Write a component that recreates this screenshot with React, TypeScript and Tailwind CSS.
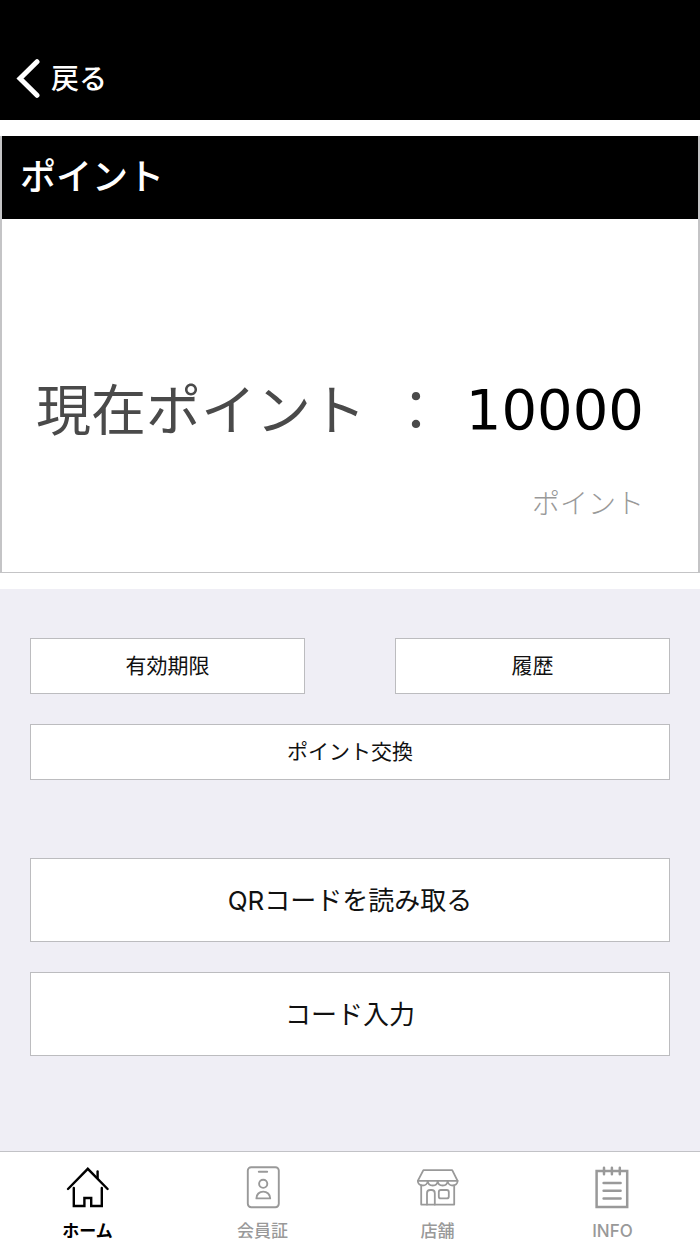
import type { ReactNode } from "react";

function HomeIcon() {
  return (
    <svg viewBox="0 0 44 44" className="size-11" fill="none" stroke="currentColor" strokeWidth="2.4" strokeLinecap="round" strokeLinejoin="miter" aria-hidden="true">
      <path d="M2 24 21.8 3.8 41.6 24" />
      <path d="M31.6 6.5V13" />
      <path d="M7.8 23V41H18.4V33H25.2V41H35.8V23" />
    </svg>
  );
}

function MemberCardIcon() {
  return (
    <svg viewBox="0 0 44 44" className="size-11" fill="none" stroke="currentColor" strokeWidth="1.9" strokeLinecap="round" strokeLinejoin="round" aria-hidden="true">
      <rect x="6.8" y="2.2" width="31" height="40" rx="3.4" />
      <path d="M17.8 6.8H26.2" />
      <circle cx="22.2" cy="18.8" r="4.1" />
      <path d="M15.4 33.4C15.4 29.4 18.3 26.6 22.2 26.6S29.2 29.4 29.2 33.4Z" />
    </svg>
  );
}

function StoreIcon() {
  return (
    <svg viewBox="0 0 44 44" className="size-11" fill="none" stroke="currentColor" strokeWidth="1.8" strokeLinecap="round" strokeLinejoin="round" aria-hidden="true">
      <path d="M7.4 5.2H36.2L41.6 15.8H1.8Z" />
      <path d="M1.8 15.8C1.8 22 11.4 22 11.75 16C12.1 22 21.4 22 21.7 16C22 22 31.3 22 31.65 16C32 22 41.6 22 41.6 15.8" />
      <path d="M5.2 20.5V39.6H38.2V20.5" />
      <path d="M11 39.6V28.2Q11 25 14.2 25H15.6Q18.8 25 18.8 28.2V39.6" />
      <rect x="22.8" y="25" width="10" height="8.4" rx="2" />
    </svg>
  );
}

function NoteIcon() {
  return (
    <svg viewBox="0 0 44 44" className="size-11" fill="none" stroke="currentColor" strokeWidth="2.5" strokeLinecap="round" aria-hidden="true">
      <rect x="5.6" y="6" width="30.6" height="36" />
      <path d="M13 2.8V9.2M20.9 2.8V9.2M28.8 2.8V9.2" />
      <path d="M12.6 18H29.6M12.6 25.7H29.6M12.6 33.4H29.6" />
    </svg>
  );
}

const tabs: { label: string; href: string; icon: ReactNode; active?: boolean }[] = [
  { label: "ホーム", href: "#home", icon: <HomeIcon />, active: true },
  { label: "会員証", href: "#member", icon: <MemberCardIcon /> },
  { label: "店舗", href: "#store", icon: <StoreIcon /> },
  { label: "INFO", href: "#info", icon: <NoteIcon /> },
];

function ActionButton({ children, large }: { children: ReactNode; large?: boolean }) {
  return (
    <button
      type="button"
      className={`w-full border border-[#bcbcbf] bg-white text-[#111] ${large ? "h-21 text-[26px]" : "h-14 text-[21px]"}`}
    >
      {children}
    </button>
  );
}

export default function App() {
  return (
    <div lang="ja" className="flex min-h-screen flex-col bg-white font-['Inter','Noto_Sans_CJK_JP',sans-serif]">
      <header className="bg-black px-4 pt-[57px] pb-[19px] text-white">
        <button type="button" className="flex items-center gap-[11px] text-[28px] leading-11 font-medium">
          <svg viewBox="0 0 24 44" className="h-11 w-6" fill="none" stroke="currentColor" strokeWidth="5" strokeLinecap="round" strokeLinejoin="miter" aria-hidden="true">
            <path d="M21 4.7 4 21.5 21 38.3" />
          </svg>
          戻る
        </button>
      </header>

      <main className="flex flex-1 flex-col">
        <section className="my-4 border-x-2 border-b border-[#c4c4c6]">
          <h1 className="bg-black px-[18px] py-4 text-[36px] leading-[51px] font-medium text-white">ポイント</h1>
          <div className="px-[34px] pt-[149px] pb-[48px]">
            <p className="flex items-center justify-between pr-5 text-[55px] leading-[84px] text-[#4a4a4a]">
              <span>現在ポイント</span>
              <span>：</span>
              <span className="font-['DejaVu_Sans',sans-serif] text-[56px] text-black">10000</span>
            </p>
            <p className="mt-8 pr-5 text-right text-[28px] leading-10 font-light text-[#999]">ポイント</p>
          </div>
        </section>

        <section className="flex flex-1 flex-col bg-[#efeef5] px-[30px] pt-[49px] pb-20">
          <div className="grid grid-cols-2 gap-[90px]">
            <ActionButton>有効期限</ActionButton>
            <ActionButton>履歴</ActionButton>
          </div>
          <div className="mt-[30px]">
            <ActionButton>ポイント交換</ActionButton>
          </div>
          <div className="mt-[78px] flex flex-col gap-[30px]">
            <ActionButton large>QRコードを読み取る</ActionButton>
            <ActionButton large>コード入力</ActionButton>
          </div>
        </section>
      </main>

      <nav className="grid grid-cols-4 border-t border-[#c2c2c6] bg-white pt-[13px] pb-px">
        {tabs.map((tab) => (
          <a
            key={tab.label}
            href={tab.href}
            aria-current={tab.active ? "page" : undefined}
            className={`flex flex-col items-center gap-[10px] text-[17px] leading-6 ${tab.active ? "font-bold text-black" : "font-medium text-[#999]"}`}
          >
            {tab.icon}
            <span>{tab.label}</span>
          </a>
        ))}
      </nav>
    </div>
  );
}
